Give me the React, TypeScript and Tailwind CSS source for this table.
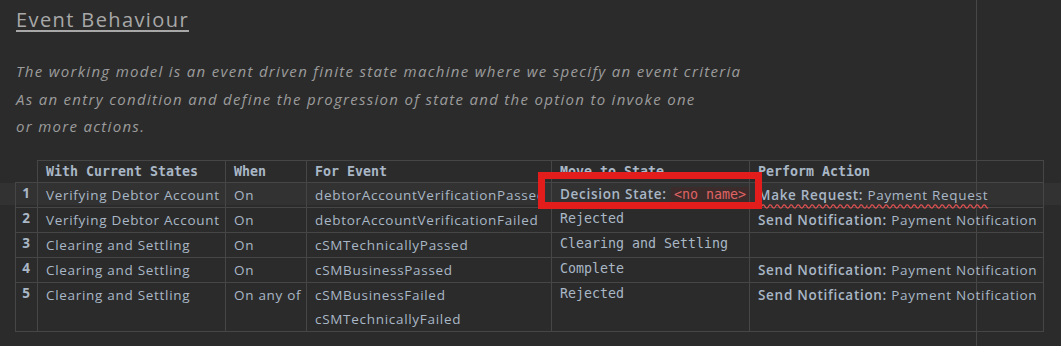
import React from 'react'

const sans = "font-['Open_Sans',sans-serif]"
const mono = "font-['DejaVu_Sans_Mono',monospace]"

type Row = {
  n: number
  state: string
  when: string
  events: string[]
  move: React.ReactNode
  action?: { kind: string; target: string; squiggle?: boolean }
}

const rows: Row[] = [
  {
    n: 1,
    state: 'Verifying Debtor Account',
    when: 'On',
    events: ['debtorAccountVerificationPassed'],
    move: (
      <span className={`${sans} text-[13.5px] tracking-[0.7px]`}>
        <span className="font-semibold">Decision State:</span>{' '}
        <span className={`${mono} bg-[#3b2b2b] px-[3px] text-[13.3px] tracking-normal text-[#e06464]`}>
          &lt;no name&gt;
        </span>
      </span>
    ),
    action: { kind: 'Make Request:', target: 'Payment Request', squiggle: true },
  },
  {
    n: 2,
    state: 'Verifying Debtor Account',
    when: 'On',
    events: ['debtorAccountVerificationFailed'],
    move: 'Rejected',
    action: { kind: 'Send Notification:', target: 'Payment Notification' },
  },
  {
    n: 3,
    state: 'Clearing and Settling',
    when: 'On',
    events: ['cSMTechnicallyPassed'],
    move: 'Clearing and Settling',
  },
  {
    n: 4,
    state: 'Clearing and Settling',
    when: 'On',
    events: ['cSMBusinessPassed'],
    move: 'Complete',
    action: { kind: 'Send Notification:', target: 'Payment Notification' },
  },
  {
    n: 5,
    state: 'Clearing and Settling',
    when: 'On any of',
    events: ['cSMBusinessFailed', 'cSMTechnicallyFailed'],
    move: 'Rejected',
    action: { kind: 'Send Notification:', target: 'Payment Notification' },
  },
]

const headers = ['With Current States', 'When', 'For Event', 'Move to State', 'Perform Action']

export default function App() {
  return (
    <div className="relative h-[346px] w-[1061px] overflow-hidden bg-[#2b2b2b] text-[#a9b7c6]">
      {/* caret line highlight */}
      <div className="absolute left-0 top-[183px] h-[22px] w-full bg-[#323232]" />
      {/* right margin guide */}
      <div className="absolute left-[976px] top-0 h-full w-px bg-[#474747]" />

      <div className="relative pl-[15px] pt-[6px]">
        <h2
          className={`${sans} ml-px text-[20px] leading-[28px] tracking-[0.07em] text-[#a8a8a8] underline underline-offset-[3px]`}
        >
          Event Behaviour
        </h2>
        <p
          className={`${sans} ml-px mt-[24px] text-[15px] italic leading-[27.5px] tracking-[1.3px] text-[#9c9c9c]`}
        >
          The working model is an event driven finite state machine where we specify an event criteria
          <br />
          As an entry condition and define the progression of state and the option to invoke one
          <br />
          or more actions.
        </p>

        <table className="mt-[19px] w-[1028px] table-fixed border-collapse">
          <colgroup>
            <col className="w-[22px]" />
            <col className="w-[188px]" />
            <col className="w-[81px]" />
            <col className="w-[245px]" />
            <col className="w-[198px]" />
            <col className="w-[294px]" />
          </colgroup>
          <thead>
            <tr>
              <th className="border-b border-[#464646]" />
              {headers.map((h) => (
                <th
                  key={h}
                  className={`${mono} border border-[#464646] px-2 text-left text-[13.3px] font-bold leading-[21px] whitespace-nowrap`}
                >
                  {h}
                </th>
              ))}
            </tr>
          </thead>
          <tbody className={`${sans} text-[13.5px] tracking-[0.7px]`}>
            {rows.map((r) => (
              <tr key={r.n}>
                <td className="border border-[#464646] pb-1 text-center align-top font-bold leading-[20px]">
                  {r.n}
                </td>
                <td className="border border-[#464646] px-2 align-top leading-[24px] whitespace-nowrap">
                  {r.state}
                </td>
                <td className="border border-[#464646] px-2 align-top leading-[24px] whitespace-nowrap">
                  {r.when}
                </td>
                <td className="overflow-hidden border border-[#464646] pl-2 align-top leading-[24px] whitespace-nowrap">
                  {r.events.map((e) => (
                    <div key={e}>{e}</div>
                  ))}
                </td>
                <td
                  className={`${mono} border border-[#464646] px-2 align-top text-[13.3px] leading-[21px] tracking-normal whitespace-nowrap ${
                    r.n === 1 ? 'pt-[1px]' : ''
                  }`}
                >
                  {r.move}
                </td>
                <td className="border border-[#464646] px-2 align-top leading-[24px] whitespace-nowrap">
                  {r.action && (
                    <span
                      className={
                        r.action.squiggle
                          ? 'underline decoration-[#e05050] decoration-wavy underline-offset-[4px]'
                          : ''
                      }
                    >
                      <span className="font-semibold">{r.action.kind}</span>{' '}
                      <span>{r.action.target}</span>
                    </span>
                  )}
                </td>
              </tr>
            ))}
          </tbody>
        </table>
      </div>

      {/* annotation box */}
      <div className="absolute left-[538px] top-[172px] h-[37px] w-[224px] border-[7px] border-[#e31c1c]" />
    </div>
  )
}
